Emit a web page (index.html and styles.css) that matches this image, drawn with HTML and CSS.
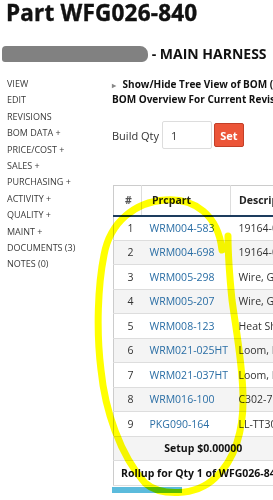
FILE: index.html
```html
<html>
	<head>
		<link rel="stylesheet" href="styles.css">
	</head>
	<body>
		<div class="page">
			<h1 class="part-title">Part WFG026-840</h1>
			<h2 class="part-sub"><span class="redact"></span> - MAIN HARNESS</h2>
			<div class="layout">
				<ul class="side-nav">
					<li>VIEW</li>
					<li>EDIT</li>
					<li>REVISIONS</li>
					<li>BOM DATA +</li>
					<li>PRICE/COST +</li>
					<li>SALES +</li>
					<li>PURCHASING +</li>
					<li>ACTIVITY +</li>
					<li>QUALITY +</li>
					<li>MAINT +</li>
					<li>DOCUMENTS (3)</li>
					<li>NOTES (0)</li>
				</ul>
				<div class="main">
					<div class="tree-toggle"><span class="caret">&#9656;</span> Show/Hide Tree View of BOM (Tree)</div>
					<div class="bom-head">BOM Overview For Current Revision</div>
					<div class="build-qty">
						<label>Build Qty</label>
						<input type="text" value="1">
						<button>Set</button>
					</div>
					<table class="bom-table">
						<thead>
							<tr><th class="num">#</th><th>Prcpart</th><th>Description</th></tr>
						</thead>
						<tbody>
							<tr><td class="num">1</td><td><a>WRM004-583</a></td><td>19164-0005</td></tr>
							<tr><td class="num">2</td><td><a>WRM004-698</a></td><td>19164-0006</td></tr>
							<tr><td class="num">3</td><td><a>WRM005-298</a></td><td>Wire, GXL</td></tr>
							<tr><td class="num">4</td><td><a>WRM005-207</a></td><td>Wire, GXL</td></tr>
							<tr><td class="num">5</td><td><a>WRM008-123</a></td><td>Heat Shrink</td></tr>
							<tr><td class="num">6</td><td><a>WRM021-025HT</a></td><td>Loom, Nylon</td></tr>
							<tr><td class="num">7</td><td><a>WRM021-037HT</a></td><td>Loom, Nylon</td></tr>
							<tr><td class="num">8</td><td><a>WRM016-100</a></td><td>C302-75</td></tr>
							<tr><td class="num">9</td><td><a>PKG090-164</a></td><td>LL-TT300</td></tr>
							<tr class="setup"><td colspan="3">Setup $0.00000</td></tr>
							<tr class="rollup"><td colspan="3">Rollup for Qty 1 of WFG026-840</td></tr>
						</tbody>
					</table>
					<div class="progress"><div class="progress-bar"></div></div>
				</div>
			</div>
			<svg class="annotation" width="273" height="500" viewBox="0 0 273 500">
				<path d="M222,250 C218,215 195,198 165,200 C135,202 110,222 104,255 C98,285 96,330 101,370 C105,410 120,455 145,483 C160,496 195,497 215,478 C235,460 244,430 243,395 C242,360 236,330 232,300 C229,270 228,255 228,236" />
			</svg>
		</div>
	</body>
</html>
```

FILE: styles.css
```css
body {
	margin: 0;
	background-color: #fff;
	font-family: "Open Sans", sans-serif;
	color: #333;
	overflow: hidden;
}

.page {
	position: relative;
	padding: 0 0 0 6px;
	width: 267px;
	height: 500px;
	overflow: hidden;
}

.part-title {
	margin: 0;
	font-size: 22.5px;
	line-height: 26px;
	letter-spacing: 0.2px;
	color: #111;
	-webkit-text-stroke: 0.4px #111;
}

.part-sub {
	margin: 18px 0 0 -4px;
	font-size: 14px;
	line-height: 20px;
	color: #111;
	white-space: nowrap;
}

.redact {
	display: inline-block;
	width: 146px;
	height: 16px;
	vertical-align: -3px;
	background-color: #818181;
	border-radius: 4px 8px 6px 3px;
}

.layout {
	display: flex;
	margin-top: 12px;
}

.side-nav {
	flex: none;
	list-style: none;
	margin: 0;
	padding: 0 0 0 1px;
	width: 105px;
	font-size: 9px;
	color: #3a3a3a;
}

.side-nav li {
	line-height: 16.4px;
}

.main {
	flex: none;
	width: 300px;
	font-size: 10px;
}

.tree-toggle {
	font-weight: bold;
	line-height: 14px;
	padding-top: 1px;
	white-space: nowrap;
	color: #111;
}

.caret {
	color: #888;
	font-size: 8px;
	margin-right: 4px;
}

.bom-head {
	font-weight: bold;
	line-height: 14px;
	white-space: nowrap;
	color: #111;
}

.build-qty {
	display: flex;
	align-items: center;
	margin-top: 15px;
	font-size: 11px;
}

.build-qty label {
	margin-right: 3px;
}

.build-qty input {
	width: 50px;
	height: 28px;
	box-sizing: border-box;
	border: 1px solid #ddd;
	border-radius: 2px;
	padding: 0 8px;
	font-family: inherit;
	font-size: 11px;
	color: #333;
}

.build-qty button {
	margin-left: 2px;
	width: 30px;
	height: 24px;
	background-color: #ec5538;
	border: 1px solid #c23f28;
	border-radius: 2px;
	color: #fff;
	font-family: inherit;
	font-weight: bold;
	font-size: 11px;
	padding: 0;
}

.bom-table {
	margin-top: 36px;
	margin-left: 1px;
	width: 180px;
	table-layout: fixed;
	border-collapse: collapse;
	border-left: 1px solid #ccc;
	border-top: 1px solid #ccc;
	font-size: 10.5px;
}

.bom-table th {
	height: 30px;
	font-weight: bold;
	text-align: left;
	padding: 0 8px;
	color: #222;
	border-right: 1px solid #ddd;
	border-bottom: 2px solid #1d3c5e;
	white-space: nowrap;
	overflow: hidden;
}

.bom-table th:nth-child(1) { width: 13px; }
.bom-table th:nth-child(2) { width: 70px; padding-left: 10px; }

.bom-table th.num {
	text-align: center;
	color: #555;
	padding: 0 6px 0 8px;
}

.bom-table td {
	height: 24.5px;
	padding: 0 8px;
	border-bottom: 1px solid #ddd;
	white-space: nowrap;
	overflow: hidden;
}

.bom-table td.num {
	text-align: right;
	padding-right: 8px;
}

.bom-table tbody tr:nth-child(even) td {
	background-color: #f4f4f4;
}

.bom-table a {
	color: #2a6ea5;
}

.bom-table tr.setup td {
	background-color: #fff;
	text-align: center;
	font-weight: bold;
	color: #111;
}

.bom-table tr.rollup td {
	background-color: #fff;
	font-weight: bold;
	padding-left: 7px;
	color: #111;
}

.progress {
	height: 6px;
	width: 70px;
	margin-top: 1px;
}

.progress-bar {
	height: 100%;
	background-color: #5bbbdc;
}

.annotation {
	position: absolute;
	top: 0;
	left: 0;
	pointer-events: none;
	mix-blend-mode: multiply;
}

.annotation path {
	fill: none;
	stroke: #ffff00;
	stroke-width: 7;
	stroke-linecap: round;
	stroke-linejoin: round;
}
```
